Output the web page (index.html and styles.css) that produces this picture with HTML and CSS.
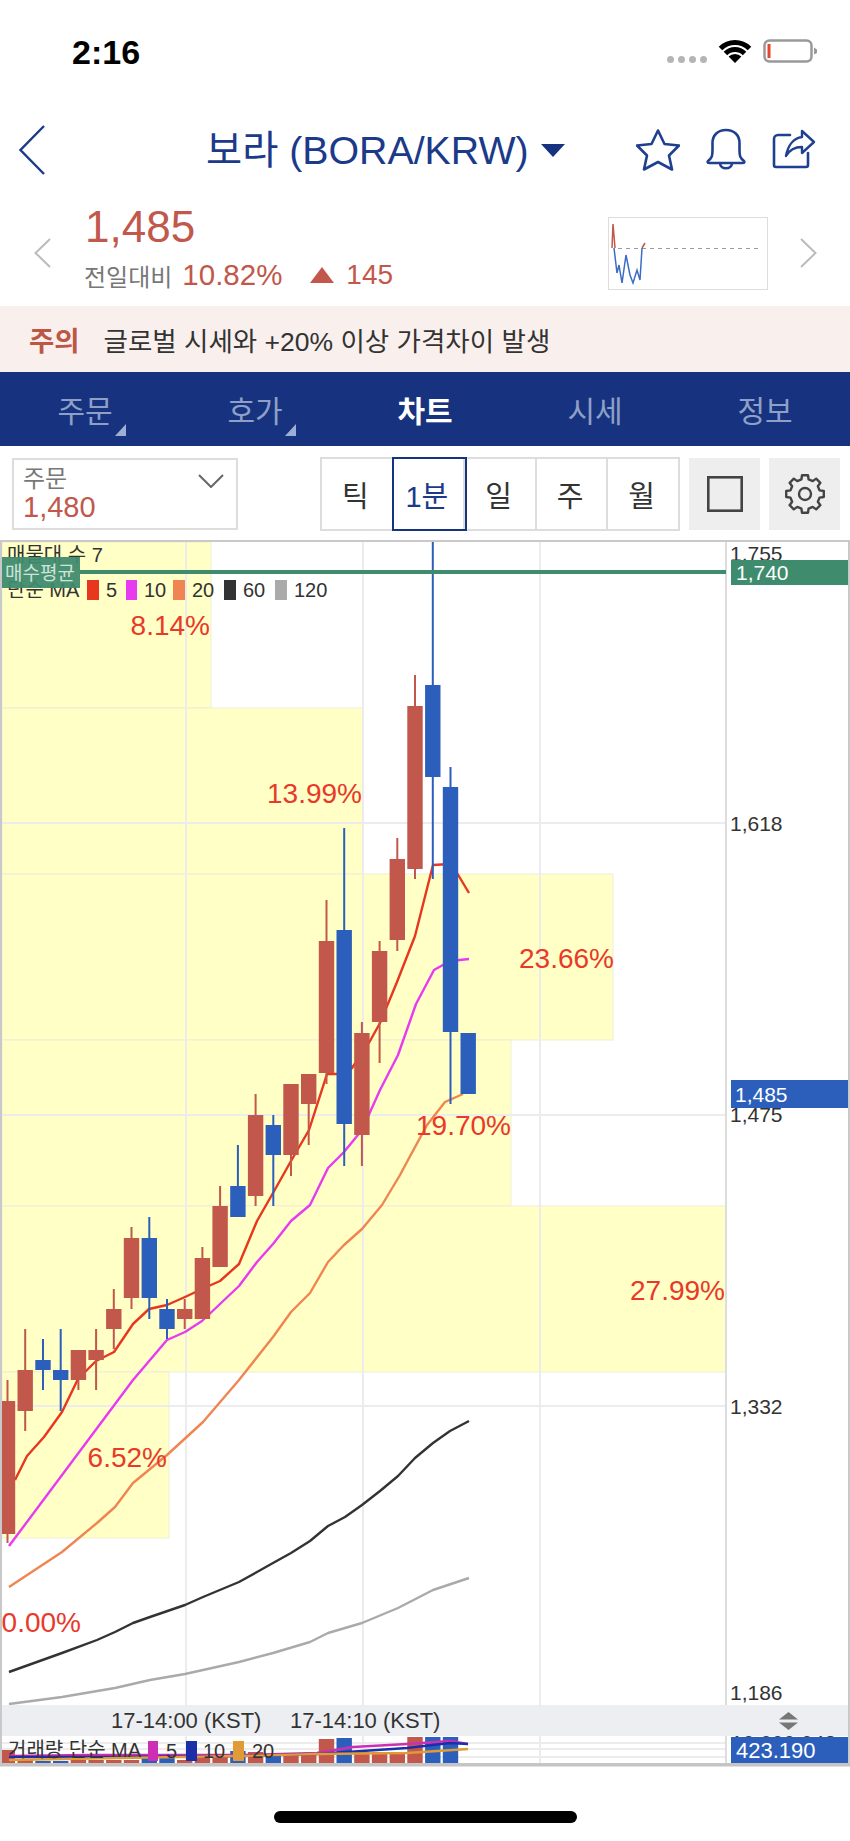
FILE: index.html
```html
<!DOCTYPE html>
<html lang="ko">
<head>
<meta charset="utf-8">
<title>보라 차트</title>
<link rel="stylesheet" href="styles.css">
</head>
<body>
<div class="page">
  <header class="status">
    <span class="time">2:16</span>
    <div class="status-right">
      <div class="dots"><i></i><i></i><i></i><i></i></div>
      <svg class="wifi" viewBox="0 0 34 24" width="34" height="24"><path d="M17 24 10.6 17.6A9 9 0 0 1 23.4 17.6Z" fill="#000"/><path d="M7.45 14.45A13.5 13.5 0 0 1 26.55 14.45M2.5 9.5A20.5 20.5 0 0 1 31.5 9.5" fill="none" stroke="#000" stroke-width="5"/></svg>
      <svg class="battery" viewBox="0 0 55 24" width="55" height="24"><rect x="1.5" y="1.5" width="47" height="21" rx="5" fill="#fff" stroke="#999" stroke-width="2.5"/><rect x="4.5" y="5" width="3" height="14" fill="#e8452f"/><path d="M51 8.5 54 10.5V14L51 15.5Z" fill="#999"/></svg>
    </div>
  </header>

  <nav class="nav">
    <svg class="back" viewBox="0 0 26 50" width="26" height="50"><path d="M25 1 1.5 25 25 49" fill="none" stroke="#1b3a8a" stroke-width="2.4"/></svg>
    <h1 class="title">보라 (BORA/KRW)</h1>
    <svg class="caret" viewBox="0 0 24 13" width="24" height="13"><path d="M0 0H24L12 13Z" fill="#17337f"/></svg>
    <div class="nav-icons">
      <svg viewBox="0 0 44 42" width="44" height="42"><path d="M22 1.5 28.5 15 43 16.5 33 26.5 36 40.5 22 33 8 40.5 11 26.5 1 16.5 15.5 15Z" fill="none" stroke="#1f3f8f" stroke-width="2.6" stroke-linejoin="round"/></svg>
      <svg viewBox="0 0 44 44" width="44" height="44"><path d="M4 33C8 30 8.5 28 8.5 22V15C8.5 7 14 2 22 2 30 2 35.5 7 35.5 15V22C35.5 28 36 30 40 33 41 34.5 40 35 38.5 35H5.500C4 35 3 34.500 4 33ZM16 35C16 42 28 42 28 35" fill="none" stroke="#1f3f8f" stroke-width="2.6" stroke-linejoin="round"/></svg>
      <svg viewBox="0 0 44 42" width="44" height="42"><path d="M18 6H6A4 4 0 0 0 2 10V36A2 2 0 0 0 4 38H34A2 2 0 0 0 36 36V24" fill="none" stroke="#1f3f8f" stroke-width="2.6" stroke-linecap="round"/><path d="M14 27C16 16 22 9 30 8V2L42 13 30 24V18C23 18 18 20 14 27Z" fill="none" stroke="#1f3f8f" stroke-width="2.4" stroke-linejoin="round"/></svg>
    </div>
  </nav>

  <section class="quote">
    <svg class="side-chevron" viewBox="0 0 17 30" width="17" height="30"><path d="M16 1 1.500 15 16 29" fill="none" stroke="#bbb" stroke-width="2"/></svg>
    <div class="quote-text">
      <div class="price">1,485</div>
      <div class="change"><span class="change-label">전일대비</span><span class="up-text pct">10.82%</span><svg class="up-tri" viewBox="0 0 24 16" width="24" height="16"><path d="M12 0 24 16H0Z" fill="#c1584b"/></svg><span class="up-text">145</span></div>
    </div>
    <svg class="mini" viewBox="0 0 160 73" width="160" height="73"><rect x=".5" y=".5" width="159" height="72" fill="#fff" stroke="#ddd"/><path d="M10 31.500H154" stroke="#999" stroke-width="1.200" stroke-dasharray="4 4" fill="none"/><path d="M4 31 5 7 7 31" fill="none" stroke="#c1584b" stroke-width="1.500"/><path d="M6 31 9 56 11 48 14 66 18 38 22 58 25 66 29 53 32 63 34 31" fill="none" stroke="#3c6cc4" stroke-width="1.500"/><path d="M34 31 37 26" fill="none" stroke="#c1584b" stroke-width="1.500"/></svg>
    <svg class="side-chevron" viewBox="0 0 17 30" width="17" height="30"><path d="M1 1 15.500 15 1 29" fill="none" stroke="#bbb" stroke-width="2"/></svg>
  </section>

  <section class="notice"><strong>주의</strong><span>글로벌 시세와 +20% 이상 가격차이 발생</span></section>

  <div class="tabs">
    <div class="tab has-mark">주문</div>
    <div class="tab has-mark">호가</div>
    <div class="tab active">차트</div>
    <div class="tab">시세</div>
    <div class="tab">정보</div>
  </div>

  <div class="toolbar">
    <div class="select">
      <div class="select-label">주문</div>
      <div class="select-value">1,480</div>
      <svg class="select-arrow" viewBox="0 0 26 14" width="26" height="14"><path d="M1 1 13 13 25 1" fill="none" stroke="#666" stroke-width="2"/></svg>
    </div>
    <div class="seg">
      <div class="seg-cell">틱</div>
      <div class="seg-cell on">1분</div>
      <div class="seg-cell">일</div>
      <div class="seg-cell">주</div>
      <div class="seg-cell">월</div>
    </div>
    <div class="tool-btn"><svg viewBox="0 0 36 36" width="36" height="36"><rect x="1.300" y="1.300" width="33.400" height="33.400" fill="none" stroke="#444" stroke-width="2.600"/></svg></div>
    <div class="tool-btn"><svg viewBox="-21 -21 42 42" width="42" height="42"><path d="M14.550-3.630 18.770-2.970 18.770 2.970 14.550 3.630 12.860 7.730 15.370 11.170 11.170 15.370 7.730 12.860 3.630 14.550 2.970 18.770-2.970 18.770-3.630 14.550-7.730 12.860-11.170 15.370-15.370 11.170-12.860 7.730-14.550 3.630-18.770 2.970-18.770-2.970-14.550-3.630-12.860-7.730-15.370-11.170-11.170-15.370-7.730-12.860-3.630-14.550-2.970-18.770 2.970-18.770 3.630-14.550 7.730-12.860 11.170-15.370 15.370-11.170 12.860-7.730Z" fill="none" stroke="#444" stroke-width="2.400" stroke-linejoin="round"/><circle r="6" fill="none" stroke="#444" stroke-width="2.400"/></svg></div>
  </div>

  <div class="chart">
    <svg viewBox="0 540 850 1227" class="chart-svg" width="850" height="1227">
      <!-- volume profile -->
      <g class="band">
        <rect x="2" y="542" width="209" height="166"/>
        <rect x="2" y="708" width="361" height="166"/>
        <rect x="2" y="874" width="611" height="166"/>
        <rect x="2" y="1040" width="509" height="166"/>
        <rect x="2" y="1206" width="724" height="166"/>
        <rect x="2" y="1372" width="167" height="166"/>
      </g>
      <!-- grid -->
      <path class="grid" d="M186 542V1763M363 542V1763M540 542V1763M2 823H726M2 1115H726M2 1406H726M2 1743H726M2 1749H726M2 1757H726"/>
      <path class="axis" d="M726 542V1763"/>
      <!-- moving averages -->
      <polyline class="ma ma120" points="9,1704 62,1697 115,1688 150,1680 185,1674 239,1662 273,1653 310,1642 328,1633 362,1623 398,1608 433,1590 469,1578"/>
      <polyline class="ma ma60" points="9,1672 62,1653 97,1640 115,1632 133,1623 150,1617 185,1605 203,1597 239,1582 257,1572 273,1563 291,1553 310,1541 328,1526 345,1517 362,1505 380,1491 398,1476 415,1458 433,1443 450,1431 469,1421"/>
      <polyline class="ma ma20" points="9,1587 62,1552 97,1523 115,1507 133,1483 167,1455 203,1422 239,1380 273,1337 291,1312 310,1293 328,1262 344,1245 362,1229 382,1205 400,1175 408,1160 427,1125 445,1102 463,1094"/>
      <polyline class="ma ma10" points="9,1546 133,1380 167,1340 185,1332 202,1321 220,1304 239,1286 257,1262 273,1244 291,1221 310,1205 328,1168 344,1152 362,1130 380,1090 398,1055 416,1004 434,970 450,961 469,959"/>
      <polyline class="ma ma5" points="15,1480 27,1456 44,1437 62,1412 78,1379 96,1361 114,1352 133,1324 149,1309 167,1305 185,1297 202,1289 220,1281 239,1264 257,1221 273,1193 291,1161 309,1130 327,1074 344,1074 352,1068 370,1041 380,1023 397,982 415,936 433,865 450,864 457,873 469,893"/>
      <!-- candles -->
      <path class="wick red" d="M7.500 1380V1543M25.200 1329V1431M78.400 1350V1390M96.100 1329V1390M113.800 1289V1349M131.500 1227V1309M184.700 1299V1329M202.400 1247V1319M220.100 1186V1267M255.600 1094V1206M291 1084V1176M308.700 1074V1145M326.500 900V1084M361.900 1022V1166M379.600 941V1063M397.300 838V951M415 675V879"/>
      <path class="wick blue" d="M43 1339V1390M60.700 1329V1411M149.300 1217V1319M167 1299V1339M237.900 1145V1217M273.300 1115V1206M344.200 828V1166M432.800 541V879M450.500 767V1104"/>
      <g class="body red">
        <rect x="2" y="1401" width="13.200" height="133"/>
        <rect x="17.500" y="1370" width="15.400" height="41"/>
        <rect x="70.700" y="1350" width="15.400" height="30"/>
        <rect x="88.400" y="1350" width="15.400" height="10"/>
        <rect x="106.100" y="1309" width="15.400" height="20"/>
        <rect x="123.800" y="1238" width="15.400" height="60"/>
        <rect x="177" y="1309" width="15.400" height="10"/>
        <rect x="194.700" y="1258" width="15.400" height="61"/>
        <rect x="212.400" y="1206" width="15.400" height="61"/>
        <rect x="247.900" y="1115" width="15.400" height="81"/>
        <rect x="283.300" y="1084" width="15.400" height="71"/>
        <rect x="301" y="1074" width="15.400" height="30"/>
        <rect x="318.800" y="941" width="15.400" height="132"/>
        <rect x="354.200" y="1033" width="15.400" height="102"/>
        <rect x="371.900" y="951" width="15.400" height="71"/>
        <rect x="389.600" y="859" width="15.400" height="81"/>
        <rect x="407.300" y="706" width="15.400" height="163"/>
      </g>
      <g class="body blue">
        <rect x="35.300" y="1360" width="15.400" height="10"/>
        <rect x="53" y="1370" width="15.400" height="10"/>
        <rect x="141.600" y="1238" width="15.400" height="60"/>
        <rect x="159.300" y="1309" width="15.400" height="20"/>
        <rect x="230.200" y="1186" width="15.400" height="31"/>
        <rect x="265.600" y="1125" width="15.400" height="30"/>
        <rect x="336.500" y="930" width="15.400" height="194"/>
        <rect x="425.100" y="685" width="15.400" height="92"/>
        <rect x="442.800" y="787" width="15.400" height="245"/>
        <rect x="460.500" y="1033" width="15.400" height="61"/>
      </g>
      <!-- percent labels -->
      <g class="pct-label">
        <text x="210" y="635">8.14%</text>
        <text x="362" y="803">13.99%</text>
        <text x="614" y="968">23.66%</text>
        <text x="511" y="1135">19.70%</text>
        <text x="725" y="1300">27.99%</text>
        <text x="167" y="1467">6.52%</text>
        <text x="81" y="1632">0.00%</text>
      </g>
      <!-- legend -->
      <text class="lbl" x="7" y="562">매물대 수 7</text>
      <text class="lbl" x="7" y="597">단순 MA</text>
      <rect x="87" y="580" width="12" height="20" fill="#e8361f"/><text class="lbl" x="106" y="597">5</text>
      <rect x="126" y="580" width="11" height="20" fill="#e83af0"/><text class="lbl" x="144" y="597">10</text>
      <rect x="173" y="580" width="12" height="20" fill="#f08552"/><text class="lbl" x="192" y="597">20</text>
      <rect x="224" y="580" width="12" height="20" fill="#333"/><text class="lbl" x="243" y="597">60</text>
      <rect x="275" y="580" width="12" height="20" fill="#aaa"/><text class="lbl" x="294" y="597">120</text>
      <!-- average buy price line -->
      <rect class="green" x="80" y="570" width="646" height="4"/>
      <rect class="green translucent" x="2" y="557" width="78" height="31"/>
      <text class="tag-light" x="5" y="580">매수평균</text>
      <!-- price axis -->
      <text class="ax" x="730" y="561">1,755</text>
      <rect class="green" x="731" y="560" width="117" height="25"/>
      <text class="tag-text" x="736" y="580">1,740</text>
      <text class="ax" x="730" y="831">1,618</text>
      <text class="ax" x="730" y="1122">1,475</text>
      <rect class="bluefill" x="731" y="1080" width="117" height="28"/>
      <text class="tag-text" x="735" y="1102">1,485</text>
      <text class="ax" x="730" y="1414">1,332</text>
      <text class="ax" x="730" y="1700">1,186</text>
      <!-- time axis -->
      <rect x="2" y="1705" width="846" height="31" fill="#eceef2"/>
      <text class="ax time-label" x="111" y="1728">17-14:00 (KST)</text>
      <text class="ax time-label" x="290" y="1728">17-14:10 (KST)</text>
      <path d="M788.500 1712 798 1719.500H779ZM779 1722.500H798L788.500 1730Z" fill="#777"/>
      <!-- volume -->
      <g class="vol red">
        <rect x="2" y="1750" width="13" height="13"/>
        <rect x="17.500" y="1760" width="15.400" height="3"/>
        <rect x="70.700" y="1760" width="15.400" height="3"/>
        <rect x="88.400" y="1760" width="15.400" height="3"/>
        <rect x="106.100" y="1760" width="15.400" height="3"/>
        <rect x="123.800" y="1760" width="15.400" height="3"/>
        <rect x="177" y="1760" width="15.400" height="3"/>
        <rect x="194.700" y="1757" width="15.400" height="6"/>
        <rect x="212.400" y="1756" width="15.400" height="7"/>
        <rect x="247.900" y="1752" width="15.400" height="11"/>
        <rect x="283.300" y="1755" width="15.400" height="8"/>
        <rect x="301" y="1754" width="15.400" height="9"/>
        <rect x="318.800" y="1739" width="15.400" height="24"/>
        <rect x="354.200" y="1752" width="15.400" height="11"/>
        <rect x="371.900" y="1752" width="15.400" height="11"/>
        <rect x="389.600" y="1752" width="15.400" height="11"/>
        <rect x="407.300" y="1737" width="15.400" height="26"/>
      </g>
      <g class="vol blue">
        <rect x="35.300" y="1761" width="15.400" height="2"/>
        <rect x="53" y="1761" width="15.400" height="2"/>
        <rect x="141.600" y="1755" width="15.400" height="8"/>
        <rect x="159.300" y="1758" width="15.400" height="5"/>
        <rect x="230.200" y="1751" width="15.400" height="12"/>
        <rect x="265.600" y="1755" width="15.400" height="8"/>
        <rect x="336.500" y="1738" width="15.400" height="25"/>
        <rect x="425.100" y="1737" width="15.400" height="26"/>
        <rect x="442.800" y="1737" width="15.400" height="26"/>
      </g>
      <polyline class="vma vma5" points="9,1756 90,1755 240,1755 317,1753 353,1747 407,1744 450,1741 468,1744"/>
      <polyline class="vma vma10" points="9,1757 120,1757 240,1756 317,1754 407,1748 450,1743 468,1744"/>
      <polyline class="vma vma20" points="9,1760 120,1758 240,1756 317,1754 407,1753 468,1749"/>
      <text class="lbl" x="8" y="1757">거래량 단순 MA</text>
      <rect x="148" y="1741" width="10" height="20" fill="#cc2fb3"/><text class="lbl" x="166" y="1758">5</text>
      <rect x="186" y="1741" width="11" height="20" fill="#1a2fa8"/><text class="lbl" x="203" y="1758">10</text>
      <rect x="233" y="1741" width="11" height="20" fill="#e09a36"/><text class="lbl" x="252" y="1758">20</text>
      <text class="ax" x="731" y="1750">10,000.048</text>
      <rect class="bluefill" x="731" y="1737" width="117" height="26"/>
      <text class="tag-text vol-tag" x="736" y="1758">423.190</text>
      <!-- frame -->
      <rect class="frame" x="1" y="541" width="848" height="1223"/>
      <path class="frame-bottom" d="M0 1765H850"/>
    </svg>
  </div>

  <footer class="home"><div class="home-bar"></div></footer>
</div>
</body>
</html>
```
FILE: styles.css
```css
* { box-sizing: border-box; }
html, body { margin: 0; padding: 0; background: #fff; }
body { font-family: "Liberation Sans", "Noto Sans CJK KR", sans-serif; color: #333; }
.page { width: 850px; height: 1841px; overflow: hidden; display: flex; flex-direction: column; }

.status { height: 100px; flex: none; display: flex; justify-content: space-between; padding: 35px 32px 0 72px; }
.time { font-size: 34px; font-weight: 700; color: #000; line-height: 34px; }
.status-right { display: flex; align-items: flex-start; padding-top: 4px; }
.dots { display: flex; gap: 4px; margin-top: 17px; margin-right: 11px; }
.dots i { width: 7px; height: 7px; border-radius: 50%; background: #b5b5b5; display: block; }
.wifi { margin-right: 11px; }

.nav { height: 100px; flex: none; display: flex; align-items: center; padding-left: 19px; color: #1b3a8a; }
.back { flex: none; }
.title { margin: 0 0 0 161px; font-size: 39.300px; font-weight: 400; line-height: 50px; white-space: nowrap; color: #1b3a8a; }
.caret { margin-left: 12px; flex: none; }
.nav-icons { margin-left: auto; display: flex; gap: 24px; padding-right: 34px; align-items: center; }

.quote { height: 106px; flex: none; display: flex; align-items: center; padding: 0 33px 0 34px; }
.quote-text { margin-left: 36px; flex: 1; display: flex; flex-direction: column; margin-top: -12px; }
.price { font-size: 44px; line-height: 50px; color: #c1584b; margin-left: -2px; }
.change { display: flex; align-items: center; height: 34px; margin-top: 6px; font-size: 28px; margin-left: -3px; }
.change-label { font-size: 24px; color: #777; margin-right: 10px; }
.up-text { color: #c1584b; }
.pct { width: 128px; font-size: 29.500px; }
.up-tri { margin-right: 12px; }
.mini { margin-right: 32px; flex: none; }

.notice { height: 66px; flex: none; background: #f9f0ee; display: flex; align-items: center; padding-left: 29px; font-size: 26.500px; color: #333; }
.notice strong { color: #bd5745; margin-right: 24px; font-weight: 700; font-size: 27.500px; }

.tabs { height: 74px; flex: none; background: #17337f; display: grid; grid-template-columns: repeat(5, 170px); }
.tab { position: relative; display: flex; align-items: center; justify-content: center; font-size: 30px; color: #8fa0c8; }
.tab.active { color: #fff; font-weight: 700; }
.tab.has-mark::after { content: ""; position: absolute; right: 44px; bottom: 10px; border-style: solid; border-width: 0 0 12px 11px; border-color: transparent transparent #9db0d4 transparent; }

.toolbar { height: 94px; flex: none; display: flex; align-items: center; padding: 2px 0 0 12px; }
.select { position: relative; width: 226px; height: 72px; border: 2px solid #ddd; padding: 6px 0 0 9px; }
.select-label { font-size: 24px; line-height: 26px; color: #777; }
.select-value { font-size: 29px; line-height: 30px; color: #c1584b; }
.select-arrow { position: absolute; top: 14px; right: 12px; }
.seg { margin-left: 82px; width: 360px; height: 74px; display: flex; border: 2px solid #ddd; }
.seg-cell { flex: 1; display: flex; align-items: center; justify-content: center; font-size: 29px; color: #333; border-right: 2px solid #ddd; padding-right: 3px; }
.seg-cell:last-child { border-right: 0; }
.seg-cell.on { color: #1b3a8a; outline: 2px solid #17337f; outline-offset: 0; position: relative; }
.tool-btn { margin-left: 9px; width: 71px; height: 72px; background: #eee; display: flex; align-items: center; justify-content: center; }

.chart { height: 1227px; flex: none; }
.chart-svg { display: block; }
.chart-svg text { font-family: "Liberation Sans", "Noto Sans CJK KR", sans-serif; }

.band rect { fill: #ffffc6; stroke: #eeeed8; stroke-width: 1; }
.grid { fill: none; stroke: #ececec; stroke-width: 2; }
.axis { fill: none; stroke: #ddd; stroke-width: 2; }
.ma { fill: none; stroke-width: 2.400; stroke-linejoin: round; }
.ma5 { stroke: #e8361f; }
.ma10 { stroke: #e83af0; }
.ma20 { stroke: #f08552; }
.ma60 { stroke: #333; }
.ma120 { stroke: #aaa; }
.wick { fill: none; stroke-width: 2; }
.wick.red { stroke: #c1584b; }
.wick.blue { stroke: #2c5fbc; }
.body.red, .vol.red { fill: #c1584b; }
.body.blue, .vol.blue { fill: #2c5fbc; }
.pct-label text { font-size: 28px; fill: #e8392b; text-anchor: end; }
.lbl { font-size: 20px; fill: #333; }
.ax { font-size: 21px; fill: #333; }
.time-label { font-size: 22px; }
.green { fill: #3f8b6e; }
.translucent { opacity: .95; }
.bluefill { fill: #2c5fbc; }
.tag-light { font-size: 19px; fill: #cfe3da; }
.tag-text { font-size: 21px; fill: #fff; }
.vol-tag { font-size: 22px; }
.vma { fill: none; stroke-width: 2.400; }
.vma5 { stroke: #cc2fb3; }
.vma10 { stroke: #1a2fa8; }
.vma20 { stroke: #e09a36; }
.frame { fill: none; stroke: #c9c9c9; stroke-width: 2; }
.frame-bottom { fill: none; stroke: #c4c4c4; stroke-width: 3; }

.home { flex: 1; position: relative; display: flex; justify-content: center; padding-top: 44px; }
.home-bar { width: 303px; height: 12px; border-radius: 6px; background: #000; }
```
